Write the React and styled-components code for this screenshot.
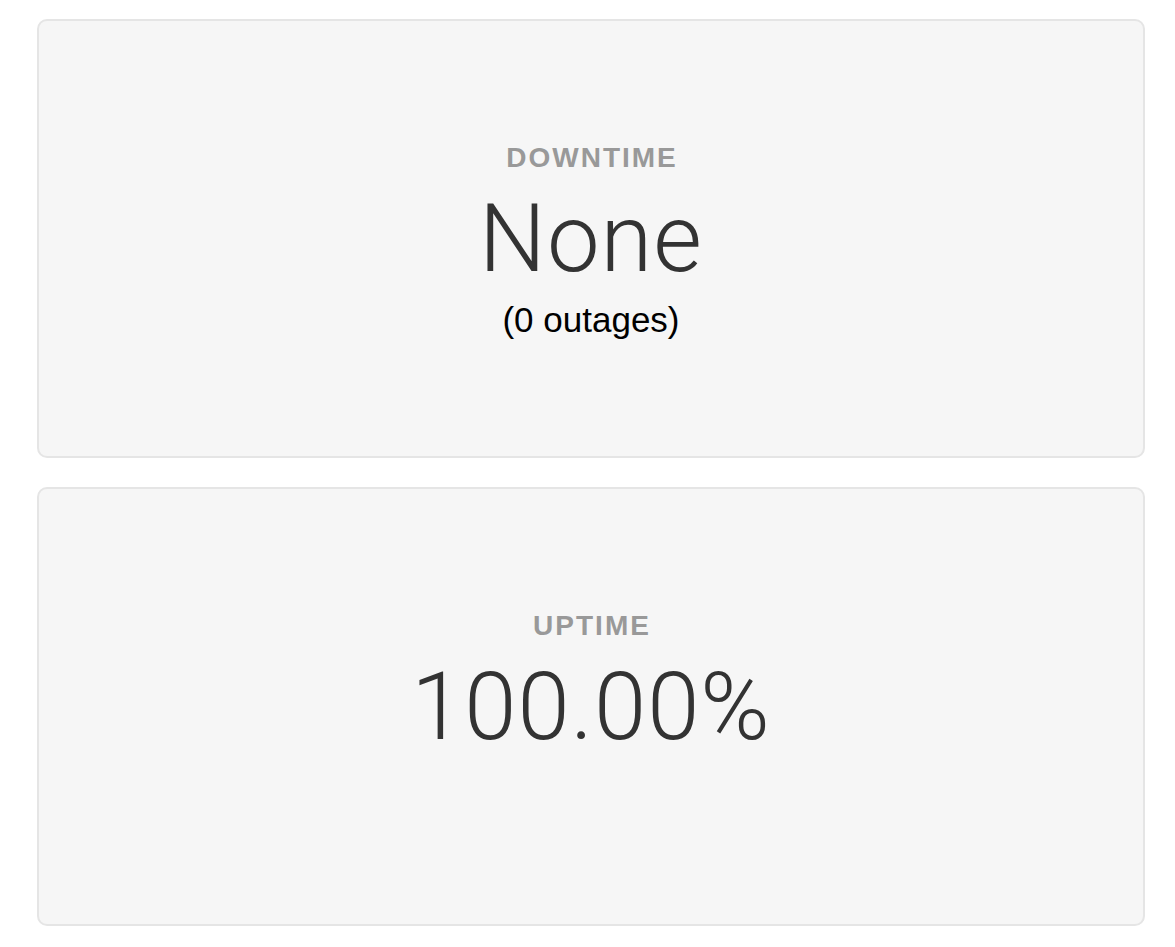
import React from 'react';
import styled, { createGlobalStyle } from 'styled-components';

const GlobalStyle = createGlobalStyle`
  html, body {
    margin: 0;
    padding: 0;
    background: #ffffff;
  }

  body {
    font-family: "Liberation Sans", Arial, sans-serif;
  }
`;

const stats = [
  { label: 'DOWNTIME', value: 'None', note: '(0 outages)' },
  { label: 'UPTIME', value: '100.00%' },
];

const App = () => {
  return (
    <>
      <GlobalStyle />
      <Page>
        {stats.map((stat) => (
          <StatCard key={stat.label}>
            <Label>{stat.label}</Label>
            <Value>{stat.value}</Value>
            {stat.note && <Note>{stat.note}</Note>}
          </StatCard>
        ))}
      </Page>
    </>
  );
};

const Page = styled.div`
  display: flex;
  flex-direction: column;
  gap: 29px;
  padding: 19px 30px 20px 37px;
`;

const StatCard = styled.div`
  box-sizing: border-box;
  height: 439px;
  display: flex;
  flex-direction: column;
  align-items: center;
  padding-top: 123px;
  background: #f6f6f6;
  border: 2px solid #e5e5e5;
  border-radius: 10px;
`;

const Label = styled.div`
  font-size: 28px;
  line-height: 28px;
  font-weight: 700;
  letter-spacing: 2px;
  padding-left: 2px;
  color: #999999;
`;

const Value = styled.div`
  margin-top: 20px;
  font-family: Roboto, Inter, sans-serif;
  font-size: 94px;
  line-height: 94px;
  font-weight: 300;
  letter-spacing: 1px;
  color: #333333;
`;

const Note = styled.div`
  margin-top: 16px;
  font-size: 35px;
  line-height: 35px;
  color: #000000;
`;

export default App;
